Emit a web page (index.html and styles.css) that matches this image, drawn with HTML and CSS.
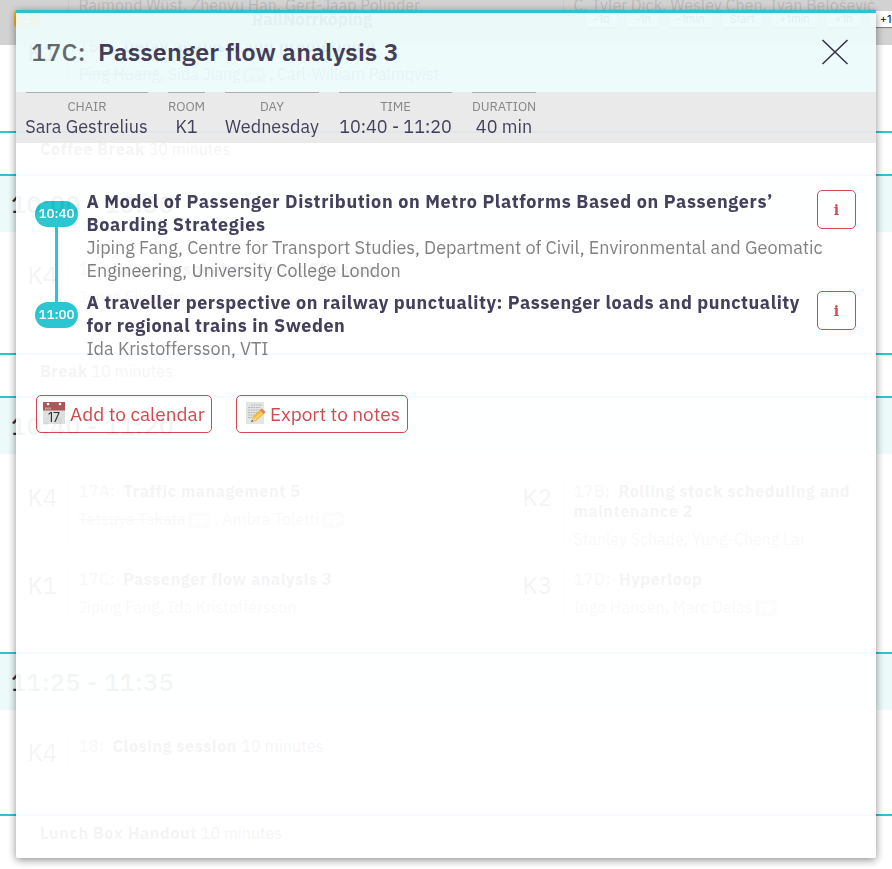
FILE: index.html
```html
<!DOCTYPE html>
<html lang="en">
<head>
<meta charset="utf-8">
<title>RailNorrköping</title>
<link rel="stylesheet" href="styles.css">
</head>
<body>
<div class="page">
  <div class="sessions first">
    <div class="session"><div class="room"></div><div class="info"><p class="people raimond">Raimond Wüst, Zhenyu Han, Gert-Jaap Polinder</p></div></div>
    <div class="session"><div class="room"></div><div class="info"><p class="people tyler">C. Tyler Dick, Wesley Chen, Ivan Belošević</p></div></div>
    <div class="session"><div class="room">K1</div><div class="info"><h3 class="delay"><span class="code">15C:</span> Delay analysis and prediction 4</h3><p class="people ping"><s>Ping Huang</s>, Sida Jiang <b class="pp">PP</b> , Carl-William Palmqvist</p></div></div>
  </div>
  <div class="break coffee"><b>Coffee Break</b> 30 minutes</div>
  <h2 class="slot">10:00 - 10:30</h2>
  <div class="sessions keynote">
    <div class="session"><div class="room">K4</div><div class="info"><h3><span class="code">16:</span> Keynote speaker: Jonas Eliasson</h3><p class="people">Jonas Eliasson</p></div></div>
  </div>
  <div class="break"><b>Break</b> 10 minutes</div>
  <h2 class="slot">10:40 - 11:20</h2>
  <div class="sessions parallel">
    <div class="session"><div class="room">K4</div><div class="info"><h3><span class="code">17A:</span> Traffic management 5</h3><p class="people"><s>Tetsuya Takata</s> <b class="pp">PP</b> , Ambra Toletti <b class="pp">PP</b></p></div></div>
    <div class="session"><div class="room">K2</div><div class="info"><h3><span class="code">17B:</span> Rolling stock scheduling and<br>maintenance 2</h3><p class="people">Stanley Schade, Yung-Cheng Lai</p></div></div>
    <div class="session"><div class="room">K1</div><div class="info"><h3><span class="code">17C:</span> Passenger flow analysis 3</h3><p class="people">Jiping Fang, Ida Kristoffersson</p></div></div>
    <div class="session"><div class="room">K3</div><div class="info"><h3><span class="code">17D:</span> Hyperloop</h3><p class="people">Ingo Hansen, Marc Delas <b class="pp">PP</b></p></div></div>
  </div>
  <h2 class="slot">11:25 - 11:35</h2>
  <div class="sessions closing">
    <div class="session"><div class="room">K4</div><div class="info"><h3><span class="code">18:</span> Closing session <span class="mins">10 minutes</span></h3></div></div>
  </div>
  <div class="break lunch"><b>Lunch Box Handout</b> 10 minutes</div>
</div>

<div class="toolbar">
  <span class="badge">2</span>
  <strong class="brand">RailNorrköping</strong>
  <div class="jumps"><button>-1d</button><button>-1h</button><button>-1min</button><button>Start</button><button>+1min</button><button>+1h</button><button>+1d</button></div>
</div>

<div class="modal">
  <header class="modal-head">
    <h1><span class="modal-code">17C:</span><span class="modal-title">Passenger flow analysis 3</span></h1>
    <svg class="close" width="28" height="28" viewBox="0 0 28 28"><path d="M1.500 2 26.500 26M26.500 2 1.500 26" fill="none" stroke="#2e2945" stroke-width="1.600"/></svg>
  </header>
  <dl class="meta">
    <div class="m-chair"><dt>CHAIR</dt><dd>Sara Gestrelius</dd></div>
    <div class="m-room"><dt>ROOM</dt><dd>K1</dd></div>
    <div class="m-day"><dt>DAY</dt><dd>Wednesday</dd></div>
    <div class="m-time"><dt>TIME</dt><dd>10:40 - 11:20</dd></div>
    <div class="m-dur"><dt>DURATION</dt><dd>40 min</dd></div>
  </dl>
  <div class="talks">
    <article class="talk linked">
      <div class="time"><span>10:40</span></div>
      <div class="talk-text"><h4>A Model of Passenger Distribution on Metro Platforms Based on Passengers’<br>Boarding Strategies</h4><p>Jiping Fang, Centre for Transport Studies, Department of Civil, Environmental and Geomatic<br>Engineering, University College London</p></div>
      <button class="more">i</button>
    </article>
    <article class="talk">
      <div class="time"><span>11:00</span></div>
      <div class="talk-text"><h4>A traveller perspective on railway punctuality: Passenger loads and punctuality<br>for regional trains in Sweden</h4><p>Ida Kristoffersson, VTI</p></div>
      <button class="more">i</button>
    </article>
  </div>
  <div class="actions">
    <button class="action calendar">
      <svg width="22" height="22" viewBox="0 0 22 22"><path fill="#dedede" d="M0 0h22v22H0z"/><path fill="#a74f52" d="M0 0h22v8.500H0z"/><path d="M2 6.500h6" stroke="#d8a5a6" stroke-width="1.800" stroke-dasharray="1.500 .7"/><circle cx="5" cy="2" r="1.300" fill="#fff"/><circle cx="17" cy="2" r="1.300" fill="#fff"/><text x="11" y="19.500" text-anchor="middle" font-family="Inter, sans-serif" font-size="12.500" fill="#222">17</text></svg>
      <span>Add to calendar</span>
    </button>
    <button class="action notes">
      <svg width="22" height="22" viewBox="0 0 22 22"><path fill="#e3e4e4" d="M1 0h18v22H1z"/><path d="M6 3h11M3 5.500h12M3 8h12M3 10.500h10M3 13h7M3 15.500h5" stroke="#aaa" stroke-width=".8" stroke-dasharray="2 .6"/><path d="m6 20 2-6 8-7 4 4-9 8z" fill="#f5b82e"/><path d="m10 17 9-8" stroke="#ffda68" stroke-width="1.500"/><path d="m15 8 2-1.500 3.500 3.500-2 2z" fill="#d97770"/><path d="m6 20 2-5 3 3z" fill="#ecd3a1"/><path d="m6 20 1-2 1.500 1z" fill="#333"/></svg>
      <span>Export to notes</span>
    </button>
  </div>
</div>
</body>
</html>
```
FILE: styles.css
```css
* { box-sizing: border-box; }
html, body { margin: 0; height: 869px; overflow: hidden; }
body { position: relative; background: #fff; color: #2e2945; font-family: "IBM Plex Sans", Roboto, sans-serif; }
h1, h2, h3, h4, p, dl, dd { margin: 0; }
button { font-family: inherit; margin: 0; padding: 0; }

.page { height: 869px; overflow: hidden; }
.sessions { display: grid; grid-template-columns: 495px 495px; padding-left: 27.500px; align-content: start; }
.session { display: flex; align-items: stretch; }
.room { width: 40px; font-size: 24px; line-height: 34px; }
.info { border-left: 1px solid #ccc; padding-left: 10px; white-space: nowrap; }
.info h3 { font-size: 16px; line-height: 20px; font-weight: 700; letter-spacing: .62px; padding-top: 1px; }
.code { color: #777; font-weight: 500; margin-right: 3.500px; }
.mins { font-weight: 400; letter-spacing: .1px; }
.people { color: #777; font-size: 16px; line-height: 20px; padding-top: 8px; }
.pp { display: inline-block; background: #bbb; color: #fff; font-size: 12.500px; line-height: 16px; font-weight: 600; width: 22px; text-align: center; border-radius: 3px; margin-left: -1px; }
.first { height: 131px; grid-template-rows: 14px 70px; row-gap: 21px; }
.first .people.raimond, .first .people.tyler { padding-top: 0; line-height: 10px; }
.first .session:nth-child(3) { align-self: start; height: 48px; }
.first .ping { letter-spacing: -.04px; }
.break { border-top: 2px solid #2ec5d0; height: 43px; padding: 6px 0 0 40px; font-size: 16px; line-height: 20px; }
.lunch { padding-top: 7px; }
.break b { font-weight: 700; letter-spacing: .66px; }
.slot { border-top: 2px solid #2ec5d0; background: #ecfafa; height: 58px; padding-left: 11px; font-size: 25px; line-height: 56px; font-weight: 500; letter-spacing: .45px; }
.keynote { height: 121px; padding-top: 26px; }
.parallel { height: 198px; padding-top: 26px; grid-template-rows: 68px 48px; row-gap: 20px; }
.closing { height: 104px; padding-top: 25px; grid-template-rows: 32px; }

.toolbar { position: absolute; inset: 0 0 auto; height: 45px; background: rgba(200, 200, 200, .82); }
.badge { position: absolute; left: 14px; top: 10px; width: 26px; height: 17px; background: #ffb31c; border-radius: 3px; color: #fff; font-size: 13px; line-height: 17px; text-align: center; font-weight: 700; }
.brand { position: absolute; left: 252px; top: 8px; font-size: 17px; line-height: 22px; font-weight: 600; letter-spacing: .15px; }
.jumps { position: absolute; left: 586px; top: 11px; display: grid; grid-template-columns: 31px 32px 43px 40px 45px 33px 38px; column-gap: 10px; }
.jumps button { border: 0; border-radius: 3px; background: #fff; color: #111; font: 11px/16px Inter, sans-serif; white-space: nowrap; box-shadow: 0 1px 1px #777; }

.modal { position: absolute; left: 16px; top: 10px; width: 860px; height: 848px; opacity: .95; background: #fff; color: #3b3552; box-shadow: 0 2px 8px rgba(0, 0, 0, .48); border-radius: 2px; }
.modal-head { display: flex; justify-content: space-between; align-items: flex-start; height: 82px; border-top: 3px solid #20c3cf; background: #edfbfb; padding: 23px 27px 0 15px; }
.modal-head h1 { font-size: 25px; line-height: 32px; font-weight: 600; white-space: nowrap; display: flex; letter-spacing: .1px; }
.modal-code { color: #5b6465; font-weight: 500; width: 67px; letter-spacing: .3px; }
.close { margin-top: 2px; }
.meta { display: flex; gap: 20px; height: 51px; background: #e9e9e9; padding-left: 10px; text-align: center; }
.meta div { border-top: 1px solid #aaa; white-space: nowrap; }
.meta dt { font-size: 13px; line-height: 16px; padding-top: 6px; color: #808080; }
.meta dd { font-size: 18px; line-height: 22px; padding-top: 1px; }
.m-chair { width: 122px; } .m-room { width: 37px; } .m-day { width: 94px; } .m-time { width: 113px; } .m-dur { width: 64px; }
.meta .m-chair dd { margin-left: -1px; }
.talks { height: 249px; padding: 47px 20px 0 19px; }
.talk { position: relative; display: flex; align-items: flex-start; height: 101px; }
.time { flex: none; width: 43px; margin: 11px 8.500px 0 0; }
.time span { position: relative; z-index: 1; display: block; height: 26px; border-radius: 13px; background: #20c3cf; color: #fff; font-size: 13.500px; line-height: 25px; font-weight: 500; text-align: center; letter-spacing: -.1px; }
.linked::before { content: ""; position: absolute; left: 20px; top: 24px; width: 3px; height: 90px; background: #20c3cf; }
.talk-text { flex: 1; min-width: 0; white-space: nowrap; font-size: 18px; line-height: 23px; }
.talk-text h4 { font-size: 18px; font-weight: 700; letter-spacing: .55px; }
.linked .talk-text h4 { letter-spacing: .64px; }
.talk-text p { color: #7b7b7b; }
.more { flex: none; width: 39px; height: 39px; border: 1px solid #d14048; border-radius: 5px; background: #fff; color: #d14048; font: 700 14px/37px "DejaVu Serif", serif; padding-top: 1px; }
.actions { display: flex; gap: 24px; padding: 3px 0 0 20px; }
.action { display: flex; align-items: center; height: 38px; border: 1px solid #d14048; border-radius: 5px; background: transparent; color: #d14048; font-size: 19px; padding-left: 6px; white-space: nowrap; }
.action svg { flex: none; margin-right: 5px; margin-top: -2px; }
.calendar { width: 176px; }
.notes { width: 172px; padding-left: 8px; }
.notes svg { margin-right: 3px; }
```
